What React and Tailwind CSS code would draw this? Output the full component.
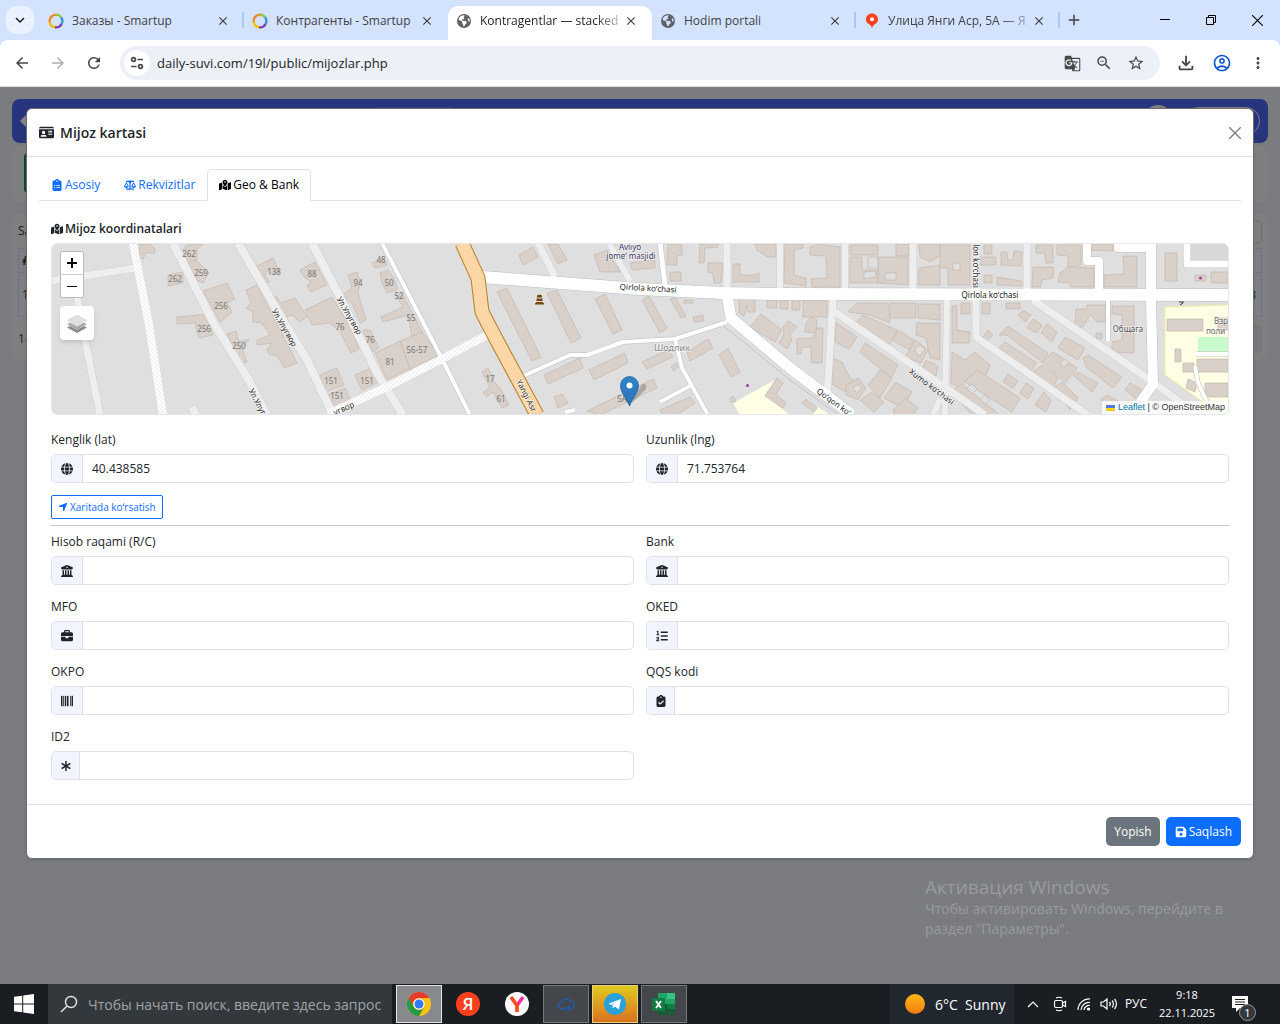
import {
    FaIdCard,
    FaClipboardList,
    FaScaleBalanced,
    FaMapLocationDot,
    FaGlobe,
    FaBuildingColumns,
    FaBriefcase,
    FaListOl,
    FaBarcode,
    FaClipboardCheck,
    FaAsterisk,
    FaLocationArrow,
    FaFloppyDisk,
    FaEarthAmericas,
} from 'react-icons/fa6';
import {
    MdClose,
    MdAdd,
    MdArrowBack,
    MdArrowForward,
    MdRefresh,
    MdKeyboardArrowDown,
    MdGTranslate,
    MdZoomOut,
    MdStarBorder,
    MdMoreVert,
    MdOutlineFileDownload,
    MdOutlineAccountCircle,
} from 'react-icons/md';

/* ---------- Browser window ---------- */

const SmartupIcon = () => (
    <svg viewBox="0 0 16 16" className="w-4 h-4 shrink-0" fill="none" strokeWidth="2.4">
        <path d="M8 1.6A6.4 6.4 0 0 1 13.2 4.4" stroke="#8cc63f" />
        <path d="M13.2 4.4A6.4 6.4 0 0 1 13.6 11" stroke="#3b8fe0" />
        <path d="M13.6 11A6.4 6.4 0 0 1 7 14.3" stroke="#7b3fa8" />
        <path d="M7 14.3A6.4 6.4 0 0 1 1.7 9" stroke="#f5c400" />
        <path d="M1.7 9A6.4 6.4 0 0 1 8 1.6" stroke="#f08a24" />
    </svg>
);

const PinIcon = () => (
    <svg viewBox="0 0 16 16" className="w-4 h-4 shrink-0">
        <path d="M8 .5C4.600 .5 2 3 2 6.300c0 2.500 1.300 3.900 3 5C6.600 12.200 7.500 13.300 8 15.500c.5-2.200 1.400-3.300 3-4.200 1.700-1.100 3-2.500 3-5C14 3 11.400 .5 8 .5z" fill="#fc3f1d" />
        <circle cx="8" cy="6.2" r="2" fill="#fff" />
    </svg>
);

const WorldIcon = () => <FaEarthAmericas className="w-4 h-4 p-px shrink-0 text-[#5f6368]" />;

const browserTabs = [
    { title: 'Заказы - Smartup', Icon: SmartupIcon, divider: true },
    { title: 'Контрагенты - Smartup', Icon: SmartupIcon },
    { title: 'Kontragentlar — stacked', Icon: WorldIcon, active: true },
    { title: 'Hodim portali', Icon: WorldIcon, divider: true },
    { title: 'Улица Янги Аср, 5А — Я', Icon: PinIcon, divider: true, fade: true },
];

const BrowserTab = ({ title, Icon, active, divider, fade }) => (
    <div
        className={`relative flex-1 min-w-0 max-w-[204px] h-[34px] flex items-center pl-2 pr-[14px] pb-1 mt-[6px] ${
            active ? 'bg-white rounded-t-[10px]' : ''
        }`}
    >
        <Icon />
        <span
            className={`ml-2 flex-1 min-w-0 overflow-hidden whitespace-nowrap text-[12px] leading-4 ${
                active ? 'text-[#1f1f1f]' : 'text-[#3f4247]'
            } ${active || fade ? '[mask-image:linear-gradient(to_right,black_80%,rgba(0,0,0,0.2))]' : ''}`}
        >
            {title}
        </span>
        <button type="button" aria-label="Close tab" className="ml-px text-[#3c4043]">
            <MdClose className="w-3.5 h-3.5" />
        </button>
        {divider && <span className="absolute right-0 top-[6px] h-4 w-0.5 bg-[#a8c7fa]" />}
    </div>
);

const TabStrip = () => (
    <div className="flex h-10 bg-[#d3e3fd]">
        <button
            type="button"
            aria-label="Search tabs"
            className="w-7 h-7 ml-[6px] mr-[6px] mt-[6px] shrink-0 flex items-center justify-center rounded-[10px] bg-[#e9f1fe] text-[#1f1f1f]"
        >
            <MdKeyboardArrowDown className="w-[18px] h-[18px]" />
        </button>
        {browserTabs.map((tab) => (
            <BrowserTab key={tab.title} {...tab} />
        ))}
        <button type="button" aria-label="New tab" className="w-7 h-10 flex items-center justify-center text-[#3c4043]">
            <MdAdd className="w-[18px] h-[18px]" />
        </button>
        <div className="ml-auto flex text-black">
            <button type="button" aria-label="Minimize" className="w-[46px] h-10 flex items-center justify-center">
                <svg viewBox="0 0 10 10" className="w-[10px] h-[10px]" stroke="currentColor"><path d="M0 4.500h10" /></svg>
            </button>
            <button type="button" aria-label="Restore" className="w-[46px] h-10 flex items-center justify-center">
                <svg viewBox="0 0 10 10" className="w-[10px] h-[10px]" stroke="currentColor" fill="none">
                    <path d="M.5 2.500h7v7h-7zM2.500 2.500v-2h7v7h-2" />
                </svg>
            </button>
            <button type="button" aria-label="Close" className="w-[46px] h-10 flex items-center justify-center">
                <svg viewBox="0 0 10 10" className="w-[11px] h-[11px]" stroke="currentColor"><path d="M0 0l10 10M10 0L0 10" /></svg>
            </button>
        </div>
    </div>
);

const Toolbar = () => (
    <div className="bg-[#d3e3fd]">
        <div className="flex items-center h-[47px] px-1 bg-white rounded-t-[8px] border-b border-[#dcdcdc] text-[#474747]">
            <button type="button" aria-label="Back" className="w-9 flex justify-center"><MdArrowBack className="w-[18px] h-[18px]" /></button>
            <button type="button" aria-label="Forward" className="w-9 flex justify-center text-[#b0b0b0]"><MdArrowForward className="w-[18px] h-[18px]" /></button>
            <button type="button" aria-label="Reload" className="w-9 flex justify-center"><MdRefresh className="w-[18px] h-[18px]" /></button>
            <div className="flex-1 min-w-0 flex items-center h-[34px] ml-2 pl-1 pr-2 rounded-full bg-[#ecf0f9]">
                <button type="button" aria-label="Site information" className="w-[26px] h-[26px] rounded-full bg-white flex items-center justify-center">
                    <svg viewBox="0 0 16 16" className="w-4 h-4" stroke="currentColor" strokeWidth="1.7" fill="none">
                        <circle cx="4.500" cy="4.500" r="1.900" />
                        <path d="M8.500 4.500H14M2 11.500h5.500" />
                        <circle cx="11.500" cy="11.500" r="1.900" />
                    </svg>
                </button>
                <input
                    type="text"
                    aria-label="Address"
                    defaultValue="daily-suvi.com/19l/public/mijozlar.php"
                    className="flex-1 min-w-0 ml-[7px] bg-transparent text-[13px] leading-5 text-[#1f1f1f] focus:outline-none"
                />
                <button type="button" aria-label="Translate" className="w-8 flex justify-center"><MdGTranslate className="w-[17px] h-[17px]" /></button>
                <button type="button" aria-label="Zoom" className="w-8 flex justify-center"><MdZoomOut className="w-[18px] h-[18px]" /></button>
                <button type="button" aria-label="Bookmark" className="w-8 flex justify-center"><MdStarBorder className="w-[18px] h-[18px]" /></button>
            </div>
            <button type="button" aria-label="Downloads" className="w-9 ml-2 flex justify-center"><MdOutlineFileDownload className="w-[22px] h-[22px]" /></button>
            <button type="button" aria-label="Profile" className="w-9 flex justify-center text-[#0b57d0]"><MdOutlineAccountCircle className="w-5 h-5" /></button>
            <button type="button" aria-label="Menu" className="w-9 flex justify-center"><MdMoreVert className="w-[18px] h-[18px]" /></button>
        </div>
    </div>
);

/* ---------- Map ---------- */

const buildings = [
    '140,244 150,244 155,249 155,253 146,253 143,259 139,257',
    '181,252 187,245 203,244 197,249 197,260 187,262',
    '168,275 183,272 183,283 168,286',
    '188,264 196,260 209,273 203,283 197,280',
    '203,291 227,283 235,299 227,303 232,312 220,322 212,307',
    '177,317 208,314 213,335 199,338 195,323 177,324',
    '227,334 236,331 239,342 249,339 242,348 247,362 241,363',
    '255,267 273,258 280,272 273,274 267,271 265,276 270,282 264,284',
    '300,270 315,262 327,285 311,292 307,285 312,282 305,278',
    '246,290 257,285 297,363 284,368 277,355 270,355 267,350 272,343 257,345 257,340 270,335 262,323 253,322 253,312 246,308 251,303',
    '273,297 277,297 281,303 295,298 307,317 300,322 292,315 283,318',
    '305,310 332,297 352,330 359,349 351,353 340,332 330,323 312,325',
    '320,375 337,368 344,385 325,392',
    '328,395 345,388 350,400 335,407',
    '348,275 357,272 360,283 358,293 366,320 360,323 352,303 343,295 352,287',
    '372,263 383,258 387,265 375,268',
    '380,273 388,270 395,280 397,290 387,293 382,283',
    '395,295 402,293 407,303 423,333 412,337 408,315 383,322 381,317 403,307',
    '363,330 370,330 379,348 373,352',
    '375,353 400,341 410,369 387,380',
    '400,341 422,332 439,355 410,369',
    '355,375 372,368 379,382 362,390',
    '482,372 488,368 495,383 500,388 509,405 502,408 493,392 487,397 483,393 490,387',
    '497,292 507,288 541,357 532,361',
    '547,293 557,290 581,338 571,343',
    '595,299 605,294 622,330 613,334',
    '519,255 533,247 538,257 523,265',
    '548,244 558,244 567,260 558,264',
    '594,255 607,250 620,272 600,272',
    '630,263 655,260 655,268 632,270',
    '544,375 580,358 583,368 548,384',
    '589,370 625,353 628,363 594,380',
    '554,397 562,394 568,403 558,408',
    '587,411 653,379 657,388 600,415',
    '642,300 649,296 667,328 660,333',
    '670,299 675,297 686,316 681,318',
    '684,300 693,300 693,303 684,303',
    '693,317 703,315 704,321 694,322',
    '668,244 682,245 682,255 677,256 677,265 667,265',
    '670,272 681,272 681,281 670,281',
    '700,244 718,244 718,247 705,248 704,263 699,263',
    '708,263 723,263 721,283 714,283 713,273 708,272',
    '733,264 740,264 740,275 755,275 759,273 759,282 733,282',
    '755,244 776,244 776,257 768,257 757,250',
    '785,244 803,244 803,248 794,250 794,275 806,278 806,286 784,283',
    '810,247 820,244 840,247 840,287 812,287 811,279 827,278 826,256 810,255',
    '850,245 878,245 878,255 850,255',
    '850,257 862,257 862,270 878,270 878,283 850,283',
    '878,257 908,257 908,285 878,283',
    '896,244 909,244 909,256 896,256',
    '919,244 940,244 940,256 930,262 920,257',
    '919,268 940,265 940,285 918,285',
    '739,299 755,300 755,312 748,312 747,305 744,316 739,313',
    '767,300 777,300 777,308 767,308',
    '780,301 788,301 788,309 780,309',
    '792,301 800,301 800,310 792,310',
    '803,300 827,300 827,317 803,317',
    '750,327 761,314 782,330 775,342',
    '783,327 788,321 797,327 790,335 792,340 787,349 779,343 784,335',
    '806,323 811,317 817,320 816,333 805,332',
    '797,339 813,338 817,328 823,328 822,363 811,363 811,347 802,347 801,354 797,354',
    '765,396 777,378 783,383 776,394 786,403 783,408',
    '802,403 806,399 817,408 814,412',
    '687,352 708,339 713,348 690,361',
    '719,355 728,348 740,372 731,377',
    '642,362 668,350 673,357 647,369',
    '671,367 676,363 678,367 674,371',
    '660,410 690,397 695,403 677,415 663,415',
    '730,398 733,396 736,401 732,403',
    '848,312 857,303 888,303 890,323 870,315',
    '890,303 916,303 916,318 890,318',
    '857,322 863,315 897,330 889,345',
    '893,340 898,330 914,340 909,350',
    '905,357 916,340 928,350 921,363',
    '917,323 940,323 940,360 930,358 926,338 916,335',
    '835,322 857,337 849,349 835,342',
    '865,343 898,365 891,378 860,352',
    '832,358 842,362 850,378 862,388 855,397 833,385',
    '846,385 858,378 866,388 858,400 846,395',
    '868,385 880,370 892,378 880,398',
    '860,400 872,392 884,402 874,412',
    '884,398 896,382 912,392 903,408',
    '893,410 906,398 918,408 913,415 895,415',
    '921,372 926,360 938,366 936,376',
    '918,304 940,304 940,320 918,318',
    '940,245 970,245 970,285 948,285 948,268 940,268',
    '984,245 992,245 992,254 984,254',
    '980,257 996,257 996,265 980,265',
    '1001,252 1007,252 1008,260 1013,260 1014,251 1022,252 1021,266 1001,265',
    '984,275 992,275 992,283 984,283',
    '997,277 1022,281 1022,286 997,285',
    '1036,245 1053,245 1053,263 1046,263 1045,253 1036,253',
    '1057,245 1081,245 1081,265 1068,267 1068,256 1057,255',
    '1033,267 1054,267 1053,278 1042,280 1041,287 1032,287',
    '1068,267 1094,268 1094,287 1070,287 1070,283 1058,282 1060,273',
    '1089,244 1113,244 1113,251 1089,250',
    '1123,256 1137,256 1137,287 1104,287 1104,275 1124,274',
    '1165,253 1177,253 1177,281 1165,281',
    '1195,275 1206,275 1206,281 1195,281',
    '1211,272 1228,272 1228,283 1211,283',
    '961,303 970,303 970,314 961,314',
    '982,303 990,303 990,314 982,314',
    '952,306 957,306 957,330 970,332 969,343 952,343',
    '1006,303 1020,303 1020,309 1006,309',
    '1018,315 1023,310 1031,315 1025,322',
    '1027,328 1033,319 1042,325 1037,333',
    '1041,333 1047,324 1057,332 1052,342',
    '983,337 988,330 993,335 987,341',
    '999,335 1008,326 1048,353 1043,363 1007,335',
    '999,348 1005,342 1037,363 1030,372',
    '1058,348 1065,337 1085,348 1078,360',
    '1042,362 1053,352 1077,368 1065,383',
    '1033,372 1042,365 1058,378 1052,390',
    '1083,358 1088,355 1122,377 1113,388 1087,368',
    '1073,375 1077,372 1098,383 1092,392',
    '1055,387 1062,382 1078,398 1070,410',
    '1100,400 1107,395 1122,403 1118,408',
    '1125,390 1130,383 1147,392 1140,402',
    '952,352 965,360 975,352 990,365 984,380 970,375 960,388 951,383',
    '965,382 977,370 1020,398 1012,412',
    '951,392 962,384 1000,415 972,415',
    '1003,382 1008,374 1018,381 1013,388',
    '1020,393 1026,383 1034,388 1028,399',
    '1035,405 1044,392 1051,400 1046,412',
    '1076,309 1087,309 1087,305 1106,305 1106,322 1097,322 1090,315 1083,327 1075,326',
    '1112,306 1134,306 1134,353 1112,352 1112,342 1122,340 1122,315 1112,314',
    '1096,333 1102,333 1102,339 1096,339',
    '1167,319 1203,319 1203,331 1167,331',
    '1218,318 1228,318 1228,330 1218,330',
    '1175,349 1181,349 1181,362 1175,362',
    '1183,363 1194,363 1194,372 1183,372',
    '1197,359 1228,359 1228,372 1197,372',
    '1188,379 1197,383 1195,392 1186,388',
    '1205,383 1228,383 1228,397 1205,397',
];

// gaps inside the building blocks (yards)
const yards = [
    '885,273 896,273 896,280 885,280',
    '864,272 875,271 876,277 864,279',
    '868,257 878,257 878,268 868,268',
    '953,263 960,263 960,270 953,270',
    '967,388 972,384 977,389 972,394',
    '980,399 985,395 990,400 985,404',
    '853,388 858,384 862,388 857,393',
    '914,349 920,345 925,350 919,356',
    '1060,363 1065,359 1069,362 1064,367',
];

const greyRoads = [
    { d: 'M51 281L136 268', w: 7 },
    { d: 'M76 290L83 330L100 415', w: 7 },
    { d: 'M173 243L213 322L247 377L267 415', w: 8 },
    { d: 'M238 243L273 303L307 360L333 415', w: 8 },
    { d: 'M312 243L340 297L377 373L403 415', w: 8 },
    { d: 'M192 407L197 418', w: 8 },
    { d: 'M538 243L555 277', w: 7 },
    { d: 'M609 243L630 281', w: 6 },
    { d: 'M727 243V290', w: 7 },
    { d: 'M780 243V290', w: 6 },
    { d: 'M845 243V290', w: 6 },
    { d: 'M913 243V290', w: 7 },
    { d: 'M833 300L827 397', w: 7 },
    { d: 'M835 312L905 360L985 415', w: 7 },
    { d: 'M947 298L945 415', w: 6 },
    { d: 'M976 243V337L1088 415', w: 7 },
    { d: 'M1027 243V290', w: 7 },
    { d: 'M1033 300L1153 382L1197 415', w: 7 },
    { d: 'M940 399L932 418', w: 6 },
];

const whiteRoads = [
    { d: 'M382 243L440 355L470 415', w: 4 },
    { d: 'M523 376L570 355L587 355L623 342L640 341L675 339L727 322', w: 4 },
    { d: 'M675 339L682 368L708 415', w: 4 },
    { d: 'M660 402L690 386', w: 4 },
    { d: 'M565 412L575 410', w: 4 },
    { d: 'M660 243L665 285', w: 5 },
    { d: 'M1087 243V261H1099V290', w: 8 },
    { d: 'M1108 298V341', w: 4 },
    { d: 'M1118 243V248H1151', w: 8 },
    { d: 'M1187 243V264H1229', w: 7 },
    { d: 'M1196 354H1228', w: 4 },
    { d: 'M1195 366L1198 383L1207 402', w: 4 },
    { d: 'M1151 243V300L1153 384L1140 403', w: 10 },
    { d: 'M727 295L731 318L790 368L852 415', w: 11 },
    { d: 'M482 277L640 289L723 293L777 294L1228 295', w: 12 },
];

const dottedRoads = ['M133 243L149 325L163 415', 'M328 414L387 387L440 360L487 335'];

const houseNumbers = [
    ['262', 189, 257], ['262', 175, 282], ['259', 201, 276], ['256', 221, 309], ['256', 204, 332],
    ['250', 239, 349], ['138', 274, 275], ['88', 312, 277], ['94', 358, 286], ['48', 381, 263],
    ['50', 389, 286], ['52', 399, 299], ['55', 411, 321], ['76', 340, 330], ['76', 370, 343],
    ['81', 390, 365], ['56-57', 417, 353], ['151', 331, 384], ['151', 367, 384], ['151', 337, 399],
    ['17', 490, 382], ['61', 501, 402], ['5А', 622, 402],
];

const streetNames = [
    { text: 'Ул.Улугвор', x: 282, y: 329, turn: 'rotate(60 282 329)' },
    { text: 'Ул.Улугвор', x: 347, y: 317, turn: 'rotate(60 347 317)' },
    { text: 'Ул.Улуг', x: 255, y: 403, turn: 'rotate(62 255 403)' },
    { text: 'угвор', x: 345, y: 411, turn: 'rotate(-24 345 411)' },
    { text: 'Yangi Asr', x: 524, y: 397, turn: 'rotate(63 524 397)' },
    { text: 'Qirlola koʻchasi', x: 648, y: 291, turn: 'rotate(3 648 291)' },
    { text: 'Qirlola koʻchasi', x: 990, y: 298, turn: 'rotate(0)' },
    { text: 'Qoʻqon koʻ', x: 832, y: 404, turn: 'rotate(36 832 404)' },
    { text: 'Xumo koʻchasi', x: 930, y: 389, turn: 'rotate(37 930 389)' },
    { text: 'lon koʻchasi', x: 973, y: 266, turn: 'rotate(90 973 266)' },
];

const MapTiles = () => (
    <svg
        viewBox="51 244 1178 170"
        preserveAspectRatio="xMidYMid slice"
        className="block w-full h-[170px] font-['Noto_Sans',sans-serif]"
        role="img"
        aria-label="Xarita"
    >
        <defs>
            <pattern id="gravel" width="4" height="4" patternUnits="userSpaceOnUse">
                <rect width="4" height="4" fill="#fff" />
                <circle cx="1" cy="1" r=".6" fill="#ccc" />
                <circle cx="3" cy="3" r=".6" fill="#d4d4d4" />
            </pattern>
            <linearGradient id="marker" x1="0" y1="0" x2="0" y2="1">
                <stop offset="0" stopColor="#2e85cb" />
                <stop offset="1" stopColor="#2b74b3" />
            </linearGradient>
        </defs>
        <rect x="51" y="244" width="1178" height="170" fill="#dfdfdf" />
        <path d="M1165 307L1229 305V415H1215L1203 402L1165 375z" fill="#ffffe5" stroke="#f2eb9a" />
        <path d="M733 403L775 380L765 395L790 415H740zM818 407L830 415H812z" fill="#ffffe5" />
        <path d="M1198 337h31v15h-31z" fill="#c8facc" />
        <path d="M1190 244h38v16h-38z" fill="#d8d8d8" />

        <g fill="#d9d0c9" stroke="#c6b8ae" strokeWidth=".7">
            {buildings.map((points) => <polygon key={points} points={points} />)}
        </g>
        <g fill="#dfdfdf" stroke="#c6b8ae" strokeWidth=".7">
            {yards.map((points) => <polygon key={points} points={points} />)}
        </g>

        <g fill="none" strokeLinejoin="round">
            <path d="M722 325L745 343L790 380L840 416" stroke="#c4c4c4" />
            {greyRoads.map(({ d, w }) => <path key={d} d={d} stroke="#cfcfcf" strokeWidth={w + 1} />)}
            {whiteRoads.map(({ d, w }) => <path key={d} d={d} stroke="#bdbdbd" strokeWidth={w + 1} />)}
            {greyRoads.map(({ d, w }) => <path key={d} d={d} stroke="#eeeeee" strokeWidth={w} />)}
            {whiteRoads.map(({ d, w }) => <path key={d} d={d} stroke="#fff" strokeWidth={w} />)}
            {dottedRoads.map((d) => <path key={d} d={d} stroke="url(#gravel)" strokeWidth="8" />)}
            <path d="M462 243L478 278L482 312L495 337L537 415" stroke="#b4802c" strokeWidth="15" />
            <path d="M462 243L478 278L482 312L495 337L537 415" stroke="#fcd6a4" strokeWidth="13" />
        </g>

        <g fontSize="8" fill="#777" textAnchor="middle">
            {houseNumbers.map(([label, x, y]) => <text key={`${x}-${y}`} x={x} y={y}>{label}</text>)}
        </g>
        <g fontSize="8" fill="#222" textAnchor="middle" stroke="#fff" strokeWidth="1.500" strokeOpacity=".7" paintOrder="stroke">
            {streetNames.map(({ text, x, y, turn }) => <text key={turn} x={x} y={y} transform={turn}>{text}</text>)}
        </g>
        <g fontSize="8" textAnchor="middle" stroke="#fff" strokeWidth="1.500" strokeOpacity=".6" paintOrder="stroke">
            <text x="630" y="250" fill="#35355e">Avliyo</text>
            <text x="631" y="259" fill="#35355e">jomeʼ masjidi</text>
            <text x="672" y="351" fontSize="9" fill="#888">Шодлик</text>
            <text x="1128" y="332" fill="#555">Общага</text>
            <text x="1214" y="324" textAnchor="start" fill="#666">Взр</text>
            <text x="1206" y="334" textAnchor="start" fill="#666">поли</text>
        </g>
        <path d="M1179 302h5M1180 305l3-2" stroke="#333" />

        {/* Monument */}
        <path d="M537 295.500c1-1 4-1 5 0v2h-5zM536.500 298.500h6v2.500h-6zM536 302h7v1h1v1.500h-9V303h1z" fill="#734a08" />
        <circle cx="747.500" cy="385.500" r="1.600" fill="#ac39ac" />
        <circle cx="1200.500" cy="278" r="1.600" fill="#ac39ac" />

        {/* Marker */}
        <path d="M631 404l14-14c3-3 1-7-3-6z" fill="#000" opacity=".2" />
        <path d="M629.500 406C627.500 400 620.500 393 620.500 385.500a9 9 0 0 1 18 0C638.500 393 631.500 400 629.500 406z" fill="url(#marker)" stroke="#1f6297" strokeWidth=".8" />
        <circle cx="629.500" cy="385.500" r="3" fill="#fff" />
    </svg>
);

const LayersIcon = () => (
    <svg viewBox="0 0 26 26" className="w-[26px] h-[26px]">
        <path d="M3 17.500L13 23l10-5.500-3-1.600-7 3.800-7-3.800z" fill="#8a8a8a" />
        <path d="M3 14.300l10 5.500 10-5.500-3-1.600-7 3.800-7-3.800z" fill="#a8a8a8" />
        <path d="M3 10.500L13 5l10 5.500L13 16z" fill="#e0e0e0" stroke="#cccccc" strokeWidth=".5" />
    </svg>
);

const Map = () => (
    <div className="relative overflow-hidden rounded-md border border-[#e4e6ea]">
        <MapTiles />
        <div className="absolute left-2 top-[7px] w-6 rounded-xs border border-[#b9b9b9] bg-white text-black">
            <button type="button" aria-label="Zoom in" className="flex w-full h-[23px] items-center justify-center border-b border-[#ccc]">
                <svg viewBox="0 0 10 10" className="w-[10px] h-[10px]" stroke="currentColor" strokeWidth="2"><path d="M0 5h10M5 0v10" /></svg>
            </button>
            <button type="button" aria-label="Zoom out" className="flex w-full h-[22px] items-center justify-center">
                <svg viewBox="0 0 10 10" className="w-[10px] h-[10px]" stroke="currentColor"><path d="M0 5.500h10" /></svg>
            </button>
        </div>
        <button type="button" aria-label="Layers" className="absolute left-2 top-[62px] w-[34px] h-[34px] flex items-center justify-center rounded-sm bg-white shadow-md">
            <LayersIcon />
        </button>
        <div className="absolute right-0 bottom-0 flex items-center gap-[3px] pl-1 pr-[3px] bg-white/80 font-['Liberation_Sans',sans-serif] text-[9px] leading-[13px] text-[#333]">
            <svg viewBox="0 0 12 8" className="w-[9px] h-[6px]"><path d="M0 0h12v4H0z" fill="#4c7be1" /><path d="M0 4h12v3H0z" fill="#ffd500" /><path d="M0 7h12v1H0z" fill="#e0bc00" /></svg>
            <span><a href="#leaflet" className="text-[#0078a8]">Leaflet</a> | © OpenStreetMap</span>
        </div>
    </div>
);

/* ---------- Client dialog ---------- */

const tabs = [
    { label: 'Asosiy', Icon: FaClipboardList },
    { label: 'Rekvizitlar', Icon: FaScaleBalanced },
    { label: 'Geo & Bank', Icon: FaMapLocationDot, active: true },
];

const bankFields = [
    { id: 'account', label: 'Hisob raqami (R/C)', Icon: FaBuildingColumns },
    { id: 'bank', label: 'Bank', Icon: FaBuildingColumns },
    { id: 'mfo', label: 'MFO', Icon: FaBriefcase },
    { id: 'oked', label: 'OKED', Icon: FaListOl },
    { id: 'okpo', label: 'OKPO', Icon: FaBarcode },
    { id: 'qqs', label: 'QQS kodi', Icon: FaClipboardCheck, narrow: true },
    { id: 'id2', label: 'ID2', Icon: FaAsterisk, narrow: true },
];

const Field = ({ id, label, Icon, value = '', narrow }) => (
    <div>
        <label htmlFor={id} className="block mb-[5px] text-[12px] leading-[18px]">{label}</label>
        <div className="flex h-[29px] rounded-[5px] border border-[#dee2e6] overflow-hidden">
            <span className={`${narrow ? 'w-7' : 'w-[31px]'} shrink-0 flex items-center justify-center bg-[#f2f5ff] border-r border-[#dee2e6]`}>
                <Icon className="h-3 w-auto" />
            </span>
            <input id={id} type="text" defaultValue={value} className="flex-1 min-w-0 px-[9px] text-[12px] focus:outline-none" />
        </div>
    </div>
);

const ClientDialog = () => (
    <div role="dialog" aria-labelledby="dialog-title" className="bg-white rounded-md border border-[#6b6c70] text-[#212529] shadow-sm">
        {/* Header */}
        <div className="flex items-center h-12 px-3 border-b border-[#dee2e6]">
            <FaIdCard className="h-[15px] w-auto" />
            <h5 id="dialog-title" className="ml-[6px] text-[14px] leading-5 font-semibold">Mijoz kartasi</h5>
            <button type="button" aria-label="Close" className="ml-auto text-[#7f7f7f]">
                <svg viewBox="0 0 12 12" className="w-3 h-3" stroke="currentColor" strokeWidth="1.400"><path d="M0 0l12 12M12 0L0 12" /></svg>
            </button>
        </div>

        {/* Body */}
        <div className="p-3">
            <div role="tablist" className="flex border-b border-[#dee2e6]">
                {tabs.map(({ label, Icon, active }) => (
                    <button
                        key={label}
                        type="button"
                        role="tab"
                        aria-selected={!!active}
                        className={`flex items-center gap-[2px] h-8 px-[11px] -mb-px text-[12px] leading-[18px] rounded-t-[5px] border ${
                            active ? 'bg-white border-[#dee2e6] border-b-white text-black' : 'border-transparent text-[#0d6efd]'
                        }`}
                    >
                        <Icon className="h-3 w-auto" />
                        {label}
                    </button>
                ))}
            </div>

            <div className="px-3 pt-[19px] pb-3">
                <h6 className="flex items-center gap-[2px] mb-[5px] text-[12px] leading-[18px] font-semibold">
                    <FaMapLocationDot className="h-3 w-auto" />
                    Mijoz koordinatalari
                </h6>
                <Map />
                <div className="grid grid-cols-2 gap-x-3 mt-4">
                    <Field id="lat" label="Kenglik (lat)" Icon={FaGlobe} value="40.438585" />
                    <Field id="lng" label="Uzunlik (lng)" Icon={FaGlobe} value="71.753764" />
                </div>
                <button type="button" className="flex items-center gap-[2px] h-6 mt-3 px-[6px] rounded-xs border border-[#0d6efd] text-[#0d6efd] text-[10px] leading-4">
                    <FaLocationArrow className="h-[10px] w-auto" />
                    Xaritada koʻrsatish
                </button>
                <hr className="mt-[6px] border-[#c4c6c9]" />
                <div className="grid grid-cols-2 gap-x-3 gap-y-[13px] mt-[7px]">
                    {bankFields.map((field) => (
                        <Field key={field.id} {...field} />
                    ))}
                </div>
            </div>
        </div>

        {/* Footer */}
        <div className="flex justify-end gap-[6px] px-3 py-3 border-t border-[#dee2e6]">
            <button type="button" className="h-[29px] px-2 rounded-[5px] bg-[#6c757d] text-white text-[12px] font-medium">Yopish</button>
            <button type="button" className="h-[29px] px-[9px] rounded-[5px] bg-[#0d6efd] text-white text-[12px] font-medium flex items-center gap-[2px]">
                <FaFloppyDisk className="h-3 w-auto" />
                Saqlash
            </button>
        </div>
    </div>
);

/* Dimmed page under the dialog */
const ClientsPage = () => (
    <div className="absolute inset-x-0 top-0 p-3 text-[12px] leading-[18px] text-[#1b1c20]" aria-hidden="true">
        <div className="flex items-center h-11 px-2 rounded-lg bg-[#27357c]">
            <svg viewBox="0 0 16 16" className="w-4 h-4" fill="#85868a"><path d="M0 8l8-8 8 8-8 8z" /></svg>
            <span className="ml-[27%] mr-auto w-[84px] h-7 rounded-md bg-[#38447f]" />
            <span className="w-7 h-8 mr-3 rounded-full bg-[#7f7f7f]" />
            <span className="w-[76px] h-7 rounded-full border border-[#7f7f7f]" />
        </div>
        <div className="mt-[3px] h-14 px-3 py-[7px] rounded-lg bg-[#7f7f81]">
            <div className="w-20 h-10 rounded-sm bg-[#0d4a2c]" />
        </div>
        <div className="mt-3 h-[146px] rounded-lg bg-[#7f7f81] p-[6px]">
            <div className="flex justify-between">
                <p className="pt-[2px]">Sa</p>
                <span className="w-40 h-6 rounded-sm border border-[#6f7074]" />
            </div>
            <table className="w-full mt-1 border border-[#6a7590]">
                <tbody>
                    <tr className="h-6 border-b border-[#6a7590]">
                        <th className="text-left px-[3px]">#</th>
                        <th />
                    </tr>
                    <tr className="h-11">
                        <td className="px-[3px]">1</td>
                        <td className="text-right px-[5px]">3</td>
                    </tr>
                </tbody>
            </table>
            <div className="mt-2 flex items-center justify-between">
                <p>1-</p>
                <span className="w-40 h-7 rounded-sm bg-[#77787b]" />
            </div>
        </div>
    </div>
);

/* ---------- Taskbar ---------- */

const ChromeLogo = () => (
    <svg viewBox="0 0 24 24" className="w-6 h-6">
        <circle cx="12" cy="12" r="12" fill="#fbc116" />
        <path d="M1.600 6A12 12 0 0 1 22.400 6H12a6 6 0 0 0-5.200 9z" fill="#e33b2e" />
        <path d="M1.600 6A12 12 0 0 0 12 24l5.200-9A6 6 0 0 1 6.800 15z" fill="#279847" />
        <circle cx="12" cy="12" r="5.600" fill="#fff" />
        <circle cx="12" cy="12" r="4.500" fill="#3079f0" />
    </svg>
);

const YandexLogo = () => (
    <span className="w-6 h-6 rounded-full bg-[#fc3f1d] text-white text-[17px] leading-6 font-semibold text-center">Я</span>
);

const YandexBrowserLogo = () => (
    <svg viewBox="0 0 24 24" className="w-6 h-6" fill="none" strokeWidth="3.600">
        <circle cx="12" cy="12" r="12" fill="#fff" />
        <path d="M18 5l-6 8.500" stroke="#f2329a" />
        <path d="M6 5l6 8.500V20" stroke="#fc4a1d" strokeLinejoin="round" />
    </svg>
);

const CloudLogo = () => (
    <svg viewBox="0 0 20 20" className="w-[18px] h-[18px]" fill="none" stroke="#1d5fc0" strokeWidth="1.300">
        <path d="M5 15.500a3.500 3.500 0 0 1 0-7 5 5 0 0 1 9.500-1.500 4 4 0 0 1 1 8.200" />
        <path d="M6 13v3h2.500M10.500 12.500v4M15 13h-2v3.500h2" />
    </svg>
);

const TelegramLogo = () => (
    <svg viewBox="0 0 24 24" className="w-[22px] h-[22px]">
        <circle cx="12" cy="12" r="12" fill="#2aa1da" />
        <path d="M5 11.800L18.500 6.500 16.300 18l-4.500-3.300-2.200 2.200-.4-4.100 6.300-4.600-7.600 4.800z" fill="#fff" />
    </svg>
);

const ExcelLogo = () => (
    <svg viewBox="0 0 24 24" className="w-6 h-6">
        <path d="M6 1h9v11H6z" fill="#21a366" />
        <path d="M15 1h7a1 1 0 0 1 1 1v5h-8z" fill="#33c481" />
        <path d="M15 7h8v5h-8z" fill="#21a366" />
        <path d="M6 12h9v6H6z" fill="#185c37" />
        <path d="M15 12h8v5h-8z" fill="#107c41" />
        <path d="M6 17h17v5a1 1 0 0 1-1 1H7a1 1 0 0 1-1-1z" fill="#185c37" />
        <rect y="6" width="13" height="13" rx="1" fill="#107c41" />
        <path d="M4 9l5 7M9 9l-5 7" stroke="#fff" strokeWidth="1.800" />
    </svg>
);

const apps = [
    { name: 'Chrome', Logo: ChromeLogo, style: 'bg-[#87898c] border-[#e4e4e4]' },
    { name: 'Yandex', Logo: YandexLogo, style: 'border-transparent' },
    { name: 'Yandex Browser', Logo: YandexBrowserLogo, style: 'border-transparent' },
    { name: 'Cloud', Logo: CloudLogo, style: 'bg-[#43474b] border-[#77797c]' },
    { name: 'Telegram', Logo: TelegramLogo, style: 'bg-linear-to-b from-[#dfc81e] to-[#d9711f] border-[#e8cf7a]' },
    { name: 'Excel', Logo: ExcelLogo, style: 'bg-[#43474b] border-[#77797c]' },
];

const Taskbar = () => (
    <div className="flex items-stretch h-10 bg-[#1a1e23] text-white">
        <button type="button" aria-label="Start" className="w-12 flex items-center justify-center">
            <svg viewBox="0 0 20 20" className="w-5 h-5" fill="#fff">
                <path d="M0 2.800l8.200-1.100v7.800H0zM9.200 1.600L20 0v9.500H9.200zM0 10.500h8.200v7.800L0 17.200zM9.200 10.500H20V20L9.200 18.400z" />
            </svg>
        </button>
        <label className="flex items-center w-[344px] pl-3 bg-[#33383d]">
            <svg viewBox="0 0 18 18" className="w-[18px] h-[18px] shrink-0" fill="none" stroke="#e4e4e4" strokeWidth="1.400">
                <circle cx="11" cy="7" r="5.500" />
                <path d="M7 11l-6 6" />
            </svg>
            <input
                type="text"
                aria-label="Search"
                placeholder="Чтобы начать поиск, введите здесь запрос"
                className="flex-1 min-w-0 ml-[10px] bg-transparent text-[14px] placeholder:text-[#a0a3a6] focus:outline-none"
            />
        </label>
        <div className="flex items-center gap-[3px] pl-1">
            {apps.map(({ name, Logo, style }) => (
                <button key={name} type="button" aria-label={name} className={`w-[46px] h-[38px] flex items-center justify-center border ${style}`}>
                    <Logo />
                </button>
            ))}
        </div>
        <div className="ml-auto flex items-center">
            <div className="flex items-center h-10 w-[124px] pl-[15px] bg-[#20272e] text-[14px] whitespace-nowrap">
                <span className="w-5 h-5 mr-[10px] shrink-0 rounded-full bg-linear-to-b from-[#fdb913] to-[#f07a13]" />
                6°C&nbsp; Sunny
            </div>
            <button type="button" aria-label="Hidden icons" className="w-[38px] flex justify-center">
                <svg viewBox="0 0 12 8" className="w-3 h-2" fill="none" stroke="#fff" strokeWidth="1.200"><path d="M1 7l5-5 5 5" /></svg>
            </button>
            <div className="flex items-center gap-2">
                <svg viewBox="0 0 16 16" className="w-4 h-4" fill="none" stroke="#fff" strokeWidth="1.200">
                    <rect x="2.500" y="4.500" width="8" height="7" rx="1.500" />
                    <path d="M10.500 7l3-1.500v5l-3-1.500M4 2c2-1 4-1 6 0M4 14c2 1 4 1 6 0" />
                </svg>
                <svg viewBox="0 0 16 16" className="w-4 h-4" fill="none" stroke="#fff" strokeWidth="1.200">
                    <path d="M2 14A11 11 0 0 1 14 3M5 14a8 8 0 0 1 9-7.500M8 14a5 5 0 0 1 6-4.500" />
                    <circle cx="12.500" cy="13" r="1" fill="#fff" />
                </svg>
                <svg viewBox="0 0 18 16" className="w-[18px] h-4" fill="none" stroke="#fff" strokeWidth="1.200">
                    <path d="M1 6h2.500L7 3v10L3.500 10H1zM9.500 6a3 3 0 0 1 0 4M12 4.500a5 5 0 0 1 0 7M14.500 3a7.500 7.500 0 0 1 0 10" />
                </svg>
            </div>
            <span className="w-9 text-center text-[12px]">РУС</span>
            <div className="w-[66px] text-center text-[11px] leading-[18px]">
                <div>9:18</div>
                <div>22.11.2025</div>
            </div>
            <button type="button" aria-label="Notifications" className="relative w-10 h-10 mr-5 flex items-center justify-center">
                <svg viewBox="0 0 16 16" className="w-4 h-4">
                    <path d="M0 0h16v12H8l-4 4v-4H0z" fill="#fff" />
                    <path d="M3 3.500h10M3 6h10M3 8.500h10" stroke="#1a1e23" />
                </svg>
                <span className="absolute right-1 bottom-[3px] w-[17px] h-[17px] rounded-full border border-[#999] bg-[#33383d] text-[11px] leading-[15px]">1</span>
            </button>
        </div>
    </div>
);

const App = () => (
    <div className="min-h-screen flex flex-col font-['Open_Sans','Noto_Sans',sans-serif]">
        <TabStrip />
        <Toolbar />
        <main className="relative flex-1 bg-[#7b7c80]">
            <ClientsPage />
            <div className="relative px-[26px] pt-[21px] pb-3">
                <ClientDialog />
            </div>
            <div className="absolute right-[53px] bottom-[45px] w-[302px] text-[#999a9d]">
                <p className="text-[19px] leading-6">Активация Windows</p>
                <p className="text-[14px] leading-5">Чтобы активировать Windows, перейдите в раздел "Параметры".</p>
            </div>
        </main>
        <Taskbar />
    </div>
);

export default App;
